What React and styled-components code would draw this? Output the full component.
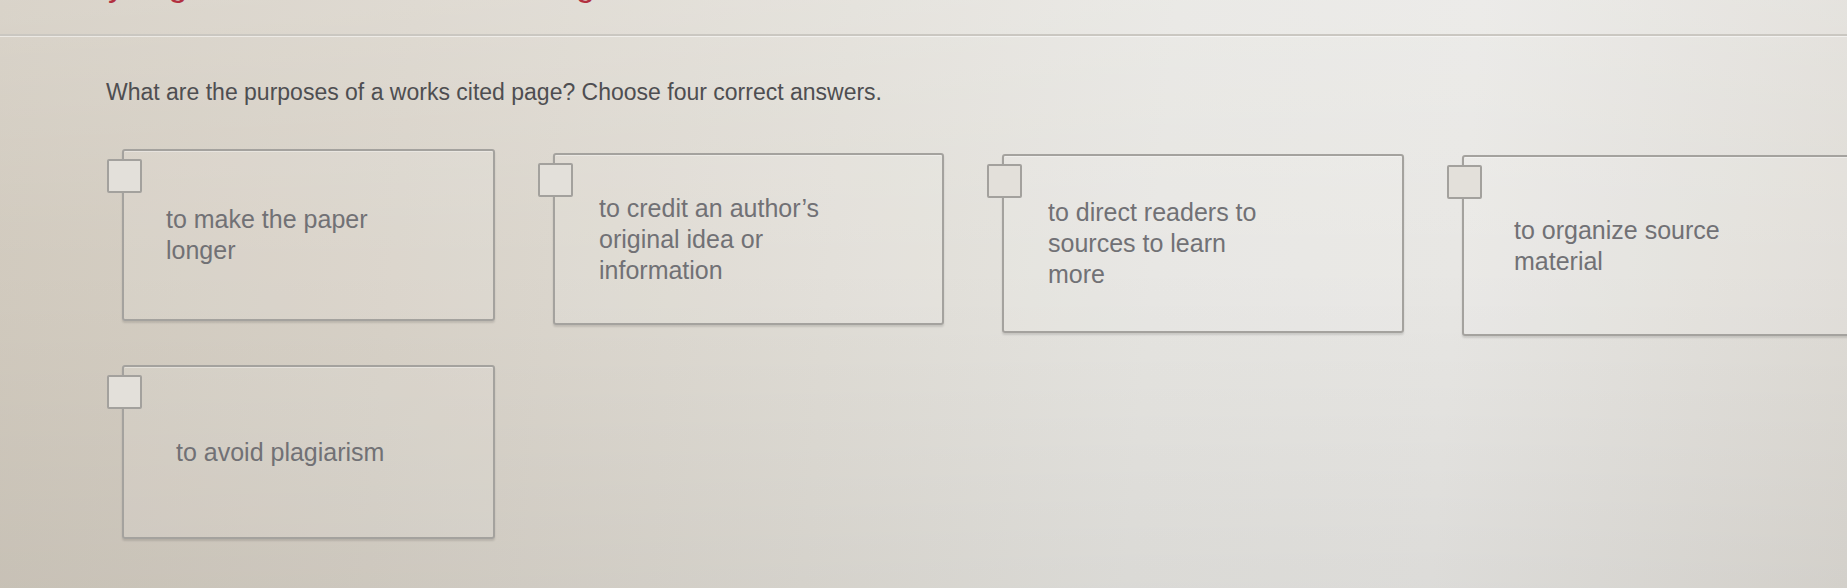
import React from "react";
import styled, { createGlobalStyle } from "styled-components";

const GlobalStyle = createGlobalStyle`
  html, body {
    margin: 0;
    padding: 0;
    overflow: hidden;
  }
  body {
    width: 1847px;
    height: 588px;
    font-family: "Liberation Sans", Arial, sans-serif;
    background:
      linear-gradient(180deg, rgba(255, 255, 255, 0.18) 0%, rgba(255, 255, 255, 0) 45%, rgba(0, 0, 0, 0.05) 100%),
      linear-gradient(95deg, #d1cabe 0%, #d8d2c8 22%, #e0ddd6 45%, #e6e5e1 62%, #e8e7e4 78%, #dedbd5 100%);
  }
`;

const TopBar = styled.header`
  height: 34px;
  overflow: hidden;
  border-bottom: 2px solid #cac7c1;
  box-shadow: 0 1px 0 rgba(255, 255, 255, 0.5);
  padding-left: 40px;
`;

const Title = styled.h1`
  margin: -36px 0 0;
  font-size: 34px;
  line-height: 40px;
  font-weight: 400;
  color: #b23040;
  white-space: nowrap;
`;

const Content = styled.main`
  padding: 42px 0 0 106px;
`;

const Question = styled.p`
  margin: 0;
  font-size: 23px;
  line-height: 28px;
  color: #4e4e51;
`;

const Choices = styled.div`
  display: grid;
  grid-template-columns: 373px 391px 402px 420px;
  grid-template-rows: 188px 174px;
  column-gap: 58px;
  row-gap: 28px;
  align-items: start;
  margin: 43px 0 0 16px;
`;

const Choice = styled.label`
  position: relative;
  display: flex;
  align-items: center;
  box-sizing: border-box;
  height: ${(p) => p.$height}px;
  margin-top: ${(p) => p.$shift}px;
  padding: 0 30px 0 ${(p) => p.$indent}px;
  border: 2px solid #a4a29e;
  border-radius: 3px;
  background: rgba(255, 255, 255, 0.1);
  box-shadow: 0 2px 2px rgba(0, 0, 0, 0.12), inset 0 1px 0 rgba(255, 255, 255, 0.35);
  cursor: pointer;
`;

const Box = styled.span`
  position: absolute;
  left: -17px;
  top: 8px;
  width: 31px;
  height: 30px;
  border: 2px solid #a3a19d;
  border-radius: 2px;
  background: #e3e0da;
`;

const Label = styled.span`
  max-width: 230px;
  font-size: 25px;
  line-height: 31px;
  color: #717175;
`;

const options = [
  { text: "to make the paper longer", indent: 42, shift: 0, height: 172 },
  { text: "to credit an author’s original idea or information", indent: 44, shift: 4, height: 172 },
  { text: "to direct readers to sources to learn more", indent: 44, shift: 5, height: 179 },
  { text: "to organize source material", indent: 50, shift: 6, height: 181 },
  { text: "to avoid plagiarism", indent: 52, shift: 0, height: 174 },
];

export default function App() {
  return (
    <>
      <GlobalStyle />
      <TopBar>
        <Title>Analyzing Sources: Works Cited Page</Title>
      </TopBar>
      <Content>
        <Question>
          What are the purposes of a works cited page? Choose four correct answers.
        </Question>
        <Choices>
          {options.map((o) => (
            <Choice key={o.text} $indent={o.indent} $shift={o.shift} $height={o.height}>
              <Box />
              <Label>{o.text}</Label>
            </Choice>
          ))}
        </Choices>
      </Content>
    </>
  );
}
